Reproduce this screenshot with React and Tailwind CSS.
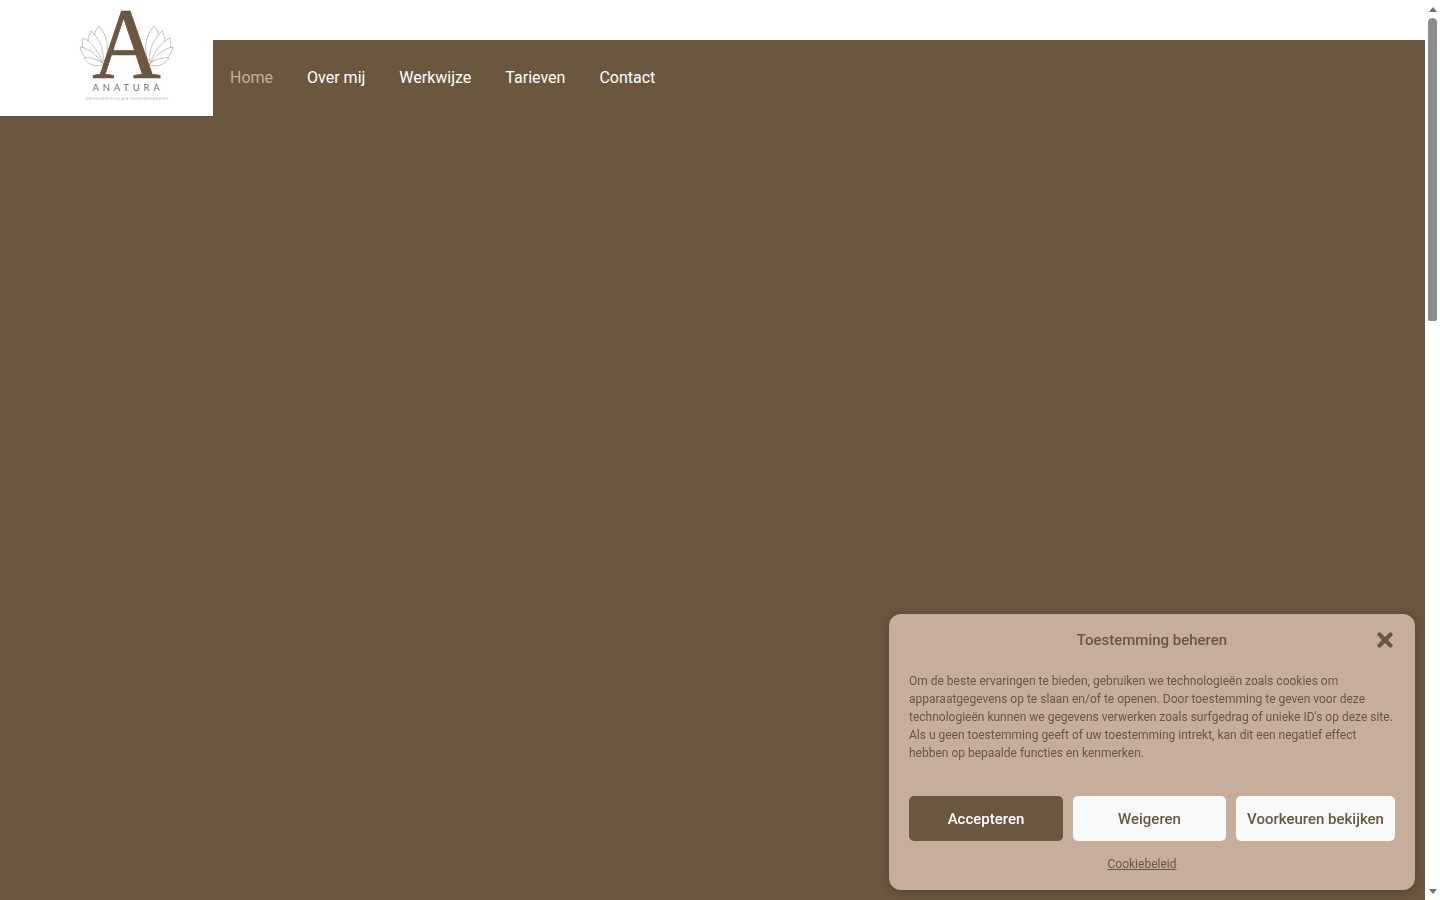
import React from 'react';
import { X } from 'lucide-react';

const navItems = ['Over mij', 'Werkwijze', 'Tarieven', 'Contact'];

// one half of the lotus, mirrored for the right side
const Lotus = ({ flip }) => (
  <g transform={flip ? 'translate(185 0) scale(-1 1)' : undefined} fill="#fff" stroke="#8f8a84" strokeWidth="0.5">
    <path d="M71 60C76 48 73 35 65 26C58 34 57 48 66 60Z" />
    <path d="M69 62C71 50 65 38 57 31C51 41 53 55 65 62Z" />
    <path d="M68 62C65 52 58 42 49 38C46 48 52 60 68 63Z" />
    <path d="M68 63C62 54 54 48 46 47C48 57 57 65 70 64Z" />
    <path d="M70 64C63 59 56 57 50 58C54 65 63 68 71 64Z" />
  </g>
);

const Logo = () => (
  <svg viewBox="0 0 186 116" className="w-[186px] h-[116px] ml-[34px]">
    <Lotus />
    <Lotus flip />
    <text transform="translate(92.5 78) scale(0.94 1)" textAnchor="middle" fontFamily="'Liberation Serif', serif" fontSize="101" stroke="#6b5740" strokeWidth="0.7" fill="#6b5740">A</text>
    <text x="94" y="91" textAnchor="middle" fontFamily="Lato, sans-serif" fontSize="9.5" letterSpacing="3.8" fill="#7d6f60">ANATURA</text>
    <text x="93" y="99.5" textAnchor="middle" fontFamily="Lato, sans-serif" fontSize="3.4" letterSpacing="0.65" fill="#b5aea6">ORTHOMOLECULAIR VOEDINGSADVIES</text>
  </svg>
);

const Scrollbar = () => (
  <div className="w-[15px] shrink-0 bg-white flex flex-col items-center">
    <div className="h-[18px] flex items-center justify-center">
      <div className="w-0 h-0 border-x-[4px] border-x-transparent border-b-[5px] border-b-[#6f6f6f]" />
    </div>
    <div className="w-[9px] h-[303px] bg-[#8c8c8c] rounded-t-[5px] rounded-b-[2px]" />
    <div className="mt-auto h-[18px] flex items-center justify-center">
      <div className="w-0 h-0 border-x-[4px] border-x-transparent border-t-[5px] border-t-[#6f6f6f]" />
    </div>
  </div>
);

const CookieBanner = () => (
  <div className="fixed right-[25px] bottom-[10px] w-[526px] h-[276px] bg-[#c7ad9c] rounded-[12px] shadow-[0_2px_10px_rgba(0,0,0,0.25)] px-5 text-[#6b5740]">
    <div className="relative h-[52px] flex items-center justify-center pt-[1px]">
      <h2 className="text-[15px] font-medium">Toestemming beheren</h2>
      <X className="absolute right-[-1px] top-[15px] w-[22px] h-[22px]" strokeWidth={4.5} />
    </div>
    <p className="mt-[6px] text-[12px] leading-[18px] w-[486px]">
      Om de beste ervaringen te bieden, gebruiken we technologieën zoals cookies om apparaatgegevens op te slaan en/of te openen. Door toestemming te geven voor deze technologieën kunnen we gegevens verwerken zoals surfgedrag of unieke ID's op deze site. Als u geen toestemming geeft of uw toestemming intrekt, kan dit een negatief effect hebben op bepaalde functies en kenmerken.
    </p>
    <div className="mt-[34px] flex gap-[10px] text-[15px] font-medium">
      <button className="w-[154px] h-[45px] pt-[1px] rounded-[5px] bg-[#6b5740] text-white">Accepteren</button>
      <button className="w-[153px] h-[45px] pt-[1px] rounded-[5px] bg-[#f9f9f9]">Weigeren</button>
      <button className="w-[159px] h-[45px] pt-[1px] rounded-[5px] bg-[#f9f9f9]">Voorkeuren bekijken</button>
    </div>
    <div className="mt-[14px] pr-[20px] text-center text-[12px] leading-[18px]">
      <a href="#" className="underline">Cookiebeleid</a>
    </div>
  </div>
);

export default function App() {
  return (
    <div className="h-screen flex overflow-hidden bg-white font-['Roboto',sans-serif]">
      <div className="relative flex-1 flex flex-col">
        <div className="h-10 shrink-0 bg-white" />
        <div className="flex-1 bg-[#6b5740]">
          <nav className="pl-[230px] h-[75px] flex items-center gap-[34px] text-base text-white">
            <a href="#" className="text-[#c7ad9c]">Home</a>
            {navItems.map((item) => (
              <a key={item} href="#">{item}</a>
            ))}
          </nav>
        </div>
        <div className="absolute left-0 top-0 w-[213px] h-[116px] bg-white">
          <Logo />
        </div>
      </div>
      <Scrollbar />
      <CookieBanner />
    </div>
  );
}
